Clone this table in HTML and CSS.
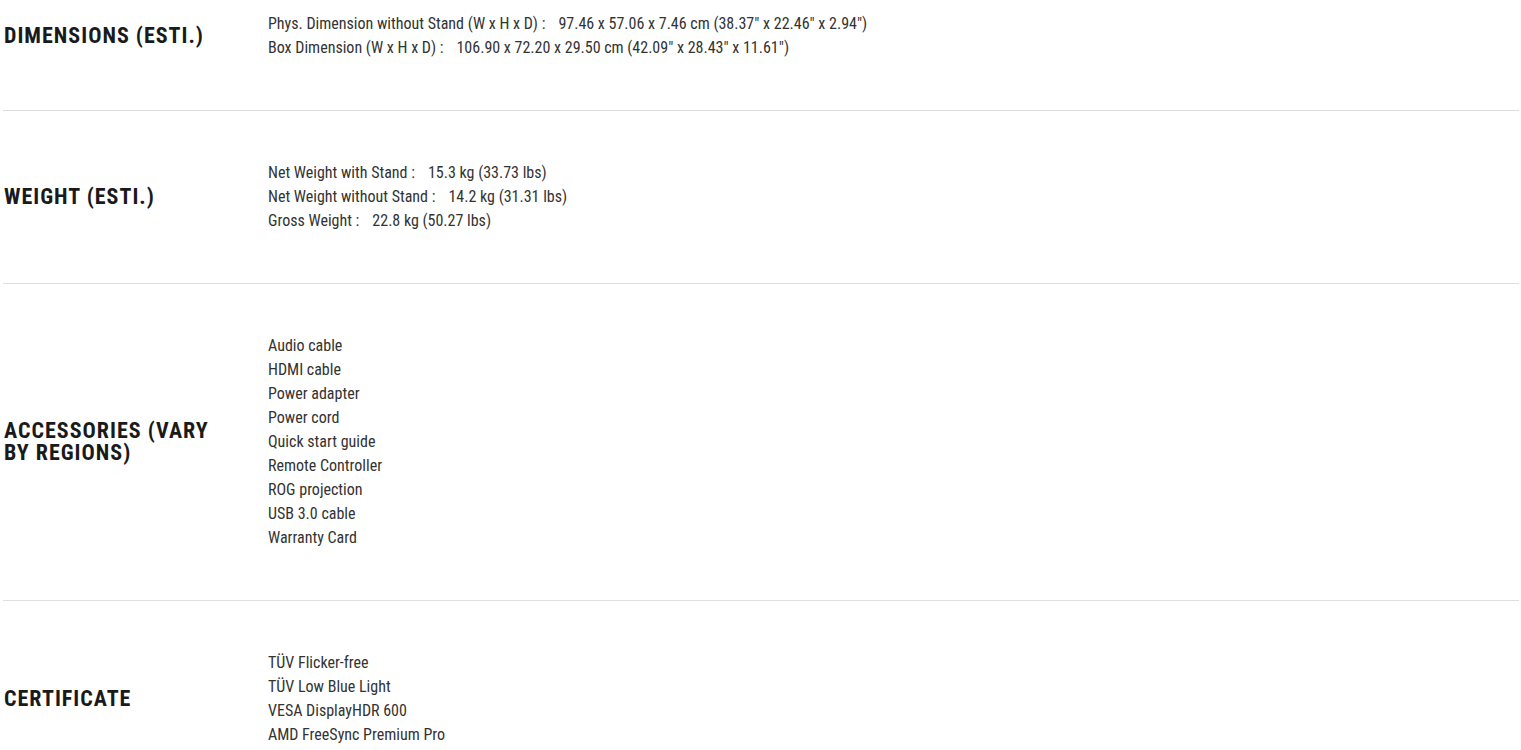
FILE: index.html
```html
<!DOCTYPE html>
<html lang="en">
<head>
  <meta charset="UTF-8">
  <meta name="viewport" content="width=device-width, initial-scale=1.0">
  <title>Tech Specs</title>
  <link rel="stylesheet" href="styles.css">
</head>
<body>
  <div class="specs">
    <div class="spec-row">
      <h3 class="spec-title">Dimensions (Esti.)</h3>
      <div class="spec-value">
        <p>Phys. Dimension without Stand (W x H x D) :<span class="val">97.46 x 57.06 x 7.46 cm (38.37" x 22.46" x 2.94")</span></p>
        <p>Box Dimension (W x H x D) :<span class="val">106.90 x 72.20 x 29.50 cm (42.09" x 28.43" x 11.61")</span></p>
      </div>
    </div>
    <div class="spec-row">
      <h3 class="spec-title">Weight (Esti.)</h3>
      <div class="spec-value">
        <p>Net Weight with Stand :<span class="val">15.3 kg (33.73 lbs)</span></p>
        <p>Net Weight without Stand :<span class="val">14.2 kg (31.31 lbs)</span></p>
        <p>Gross Weight :<span class="val">22.8 kg (50.27 lbs)</span></p>
      </div>
    </div>
    <div class="spec-row">
      <h3 class="spec-title">Accessories (vary by regions)</h3>
      <div class="spec-value">
        <p>Audio cable</p>
        <p>HDMI cable</p>
        <p>Power adapter</p>
        <p>Power cord</p>
        <p>Quick start guide</p>
        <p>Remote Controller</p>
        <p>ROG projection</p>
        <p>USB 3.0 cable</p>
        <p>Warranty Card</p>
      </div>
    </div>
    <div class="spec-row">
      <h3 class="spec-title">Certificate</h3>
      <div class="spec-value">
        <p>TÜV Flicker-free</p>
        <p>TÜV Low Blue Light</p>
        <p>VESA DisplayHDR 600</p>
        <p>AMD FreeSync Premium Pro</p>
      </div>
    </div>
  </div>
</body>
</html>
```
FILE: styles.css
```css
body {
  margin: 0;
  background: #fff;
  font-family: "Roboto Condensed", Roboto, sans-serif;
  font-stretch: condensed;
}

.specs {
  margin-top: -38px;
  padding: 0 2px 0 3px;
}

.spec-row {
  display: grid;
  grid-template-columns: 225px 1fr;
  column-gap: 40px;
  align-items: center;
  padding: 50px 0;
  border-bottom: 1px solid #dedede;
}

.spec-title {
  margin: 0;
  padding-left: 1px;
  font-size: 22px;
  line-height: 22px;
  font-weight: 700;
  letter-spacing: 1px;
  text-transform: uppercase;
  color: #1a1a1a;
}

.spec-value p {
  margin: 0;
  font-size: 16px;
  line-height: 24px;
  color: #333;
}

.spec-value .val {
  margin-left: 13px;
}
```
